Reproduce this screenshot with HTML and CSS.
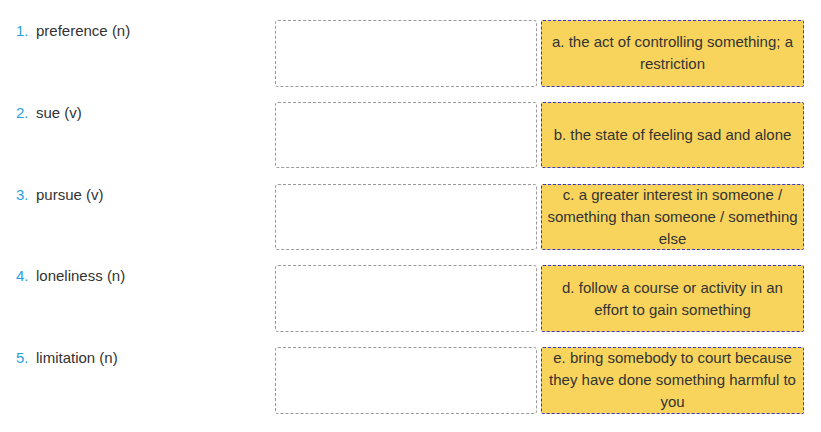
FILE: index.html
```html
<!DOCTYPE html>
<html>
<head>
<meta charset="utf-8">
<link rel="stylesheet" href="styles.css">
</head>
<body>
<div class="list">
  <div class="row">
    <div class="label"><span class="num">1.</span>preference (n)</div>
    <div class="drop"></div>
    <div class="card"><span>a. the act of controlling something; a restriction</span></div>
  </div>
  <div class="row">
    <div class="label"><span class="num">2.</span>sue (v)</div>
    <div class="drop"></div>
    <div class="card"><span>b. the state of feeling sad and alone</span></div>
  </div>
  <div class="row">
    <div class="label"><span class="num">3.</span>pursue (v)</div>
    <div class="drop"></div>
    <div class="card"><span>c. a greater interest in someone / something than someone / something else</span></div>
  </div>
  <div class="row">
    <div class="label"><span class="num">4.</span>loneliness (n)</div>
    <div class="drop"></div>
    <div class="card"><span>d. follow a course or activity in an effort to gain something</span></div>
  </div>
  <div class="row">
    <div class="label"><span class="num">5.</span>limitation (n)</div>
    <div class="drop"></div>
    <div class="card"><span>e. bring somebody to court because they have done something harmful to you</span></div>
  </div>
</div>
</body>
</html>
```

FILE: styles.css
```css
html, body {
  margin: 0;
  padding: 0;
  background: #fff;
}
body {
  font-family: "Liberation Sans", Arial, sans-serif;
  font-size: 15px;
  color: #333;
}
.list {
  display: flex;
  flex-direction: column;
  gap: 15.25px;
  padding: 20px 0 0 16px;
}
.row {
  display: grid;
  grid-template-columns: 255px 262px 263px;
  column-gap: 4px;
  align-items: start;
}
.label {
  line-height: 20px;
  padding-top: 1px;
}
.num {
  color: #2a9fe0;
  display: inline-block;
  width: 20px;
}
.drop {
  border: 1px dashed #9a9a9a;
  border-radius: 3px;
  height: 66.5px;
  box-sizing: border-box;
}
.card {
  background: #f8d45c;
  border: 1px dashed #3a35d6;
  border-radius: 2px;
  box-sizing: border-box;
  height: 66.5px;
  display: flex;
  align-items: center;
  justify-content: center;
  text-align: center;
  line-height: 22px;
  padding: 0 5px;
}
```
